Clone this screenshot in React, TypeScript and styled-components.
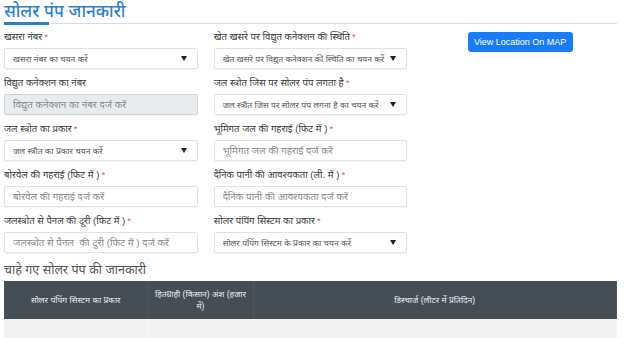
import React from 'react';
import styled, { createGlobalStyle } from 'styled-components';

const GlobalStyle = createGlobalStyle`
    html, body {
        margin: 0;
        padding: 0;
        background: #fff;
        font-family: "Liberation Sans", "Noto Sans", sans-serif;
    }
`;

const Page = styled.div`
    width: 627px;
    height: 338px;
    overflow: hidden;
    padding: 0 10px 0 4px;
    box-sizing: border-box;
`;

const TitleBar = styled.div`
    border-bottom: 1px solid #dcdcdc;
    height: 23px;
    display: flex;
    align-items: flex-end;
`;

const Title = styled.h2`
    margin: 0;
    font-size: 17px;
    font-weight: 500;
    line-height: 22px;
    color: #2b7fd0;
    position: relative;
    &:after {
        content: '';
        position: absolute;
        left: 0;
        bottom: -2px;
        width: 45px;
        height: 3px;
        background: #2b7fd0;
    }
`;

const FormGrid = styled.div`
    display: grid;
    grid-template-columns: repeat(3, minmax(0, 1fr));
    column-gap: 16px;
    padding-top: 6px;
`;

const Column = styled.div`
    display: flex;
    flex-direction: column;
    min-width: 0;
`;

const ButtonColumn = styled.div`
    display: flex;
    justify-content: center;
    align-items: flex-start;
    padding-top: 2px;
`;

const Group = styled.div`
    margin-bottom: 7px;
`;

const Label = styled.label`
    display: block;
    font-size: 9.6px;
    line-height: 14px;
    color: #3a3a3a;
    margin-bottom: 4px;
    white-space: nowrap;
`;

const Star = styled.span`
    color: #e5533d;
    margin-left: 2px;
`;

const Field = styled.div<{ $disabled?: boolean }>`
    height: 21px;
    box-sizing: border-box;
    border: 1px solid ${p => (p.$disabled ? '#ced4da' : '#e2e2e2')};
    border-radius: 2px;
    background: ${p => (p.$disabled ? '#e9ecef' : '#fff')};
    box-shadow: 0 1px 1px rgba(0, 0, 0, 0.04);
    display: flex;
    align-items: center;
    padding: 0 6px 0 8px;
`;

const SelectText = styled.span`
    flex: 1;
    min-width: 0;
    font-size: 8.5px;
    color: #555;
    white-space: nowrap;
    overflow: hidden;
`;

const Placeholder = styled.span`
    flex: 1;
    min-width: 0;
    font-size: 9.8px;
    color: #8a8a8a;
    white-space: pre;
    overflow: hidden;
`;

const Caret = styled.span`
    flex: none;
    width: 0;
    height: 0;
    border-left: 3px solid transparent;
    border-right: 3px solid transparent;
    border-top: 5px solid #222;
    margin: 0 4px 0 3px;
`;

const MapButton = styled.button`
    background: #1a7cf4;
    color: #fff;
    border: none;
    border-radius: 3px;
    font-family: "Liberation Sans", Arial, sans-serif;
    font-size: 9px;
    height: 20px;
    width: 105px;
    padding: 0;
    white-space: nowrap;
    cursor: pointer;
`;

const SubHeading = styled.h3`
    margin: 0 0 1px;
    font-size: 12.5px;
    font-weight: 400;
    color: #555;
    line-height: 20px;
`;

const Table = styled.table`
    width: 100%;
    border-collapse: collapse;
    table-layout: fixed;
`;

const Th = styled.th<{ $w?: number }>`
    box-sizing: border-box;
    background: #454d55;
    color: #eef0f2;
    font-size: 8.5px;
    font-weight: 400;
    height: 38px;
    padding: 0 4px;
    line-height: 12px;
    text-align: center;
    border-right: 1px solid #4d555d;
    width: ${p => (p.$w ? `${p.$w}px` : 'auto')};
`;

const Td = styled.td`
    background: #f2f2f2;
    height: 20px;
    border-right: 1px solid #f7f7f7;
`;

type FieldProps = {
    label: string;
    required?: boolean;
    text: string;
    kind: 'select' | 'input' | 'disabled';
};

const FormField = ({ label, required, text, kind }: FieldProps) => (
    <Group>
        <Label>
            {label}
            {required && <Star>*</Star>}
        </Label>
        <Field $disabled={kind === 'disabled'}>
            {kind === 'select' ? (
                <>
                    <SelectText>{text}</SelectText>
                    <Caret />
                </>
            ) : (
                <Placeholder>{text}</Placeholder>
            )}
        </Field>
    </Group>
);

export default function App() {
    return (
        <Page>
            <GlobalStyle />
            <TitleBar>
                <Title>सोलर पंप जानकारी</Title>
            </TitleBar>
            <FormGrid>
                <Column>
                    <FormField label="खसरा नंबर" required kind="select" text="खसरा नंबर का चयन करें" />
                    <FormField label="विद्युत कनेक्शन का नंबर" kind="disabled" text="विद्युत कनेक्शन का नंबर दर्ज करें" />
                    <FormField label="जल स्त्रोत का प्रकार" required kind="select" text="जल स्त्रोत का प्रकार चयन करें" />
                    <FormField label="बोरवेल की गहराई (फिट में )" required kind="input" text="बोरवेल की गहराई दर्ज करें" />
                    <FormField label="जलस्त्रोत से पैनल  की दूरी (फिट में )" required kind="input" text="जलस्त्रोत से पैनल  की दुरी (फिट में ) दर्ज करें" />
                </Column>
                <Column>
                    <FormField label="खेत खसरे पर विद्युत कनेक्शन की स्थिति" required kind="select" text="खेत खसरे पर विद्युत कनेक्शन की स्थिति का चयन करें" />
                    <FormField label="जल स्त्रोत जिस पर सोलर पंप लगता है" required kind="select" text="जल स्त्रोत जिस पर सोलर पंप लगना है का चयन करें" />
                    <FormField label="भूमिगत जल की गहराई (फिट में )" required kind="input" text="भूमिगत जल की गहराई दर्ज करें" />
                    <FormField label="दैनिक पानी की आवश्यकता (ली. में )" required kind="input" text="दैनिक पानी की आवश्यकता दर्ज करें" />
                    <FormField label="सोलर पंपिंग सिस्टम का प्रकार" required kind="select" text="सोलर पंपिंग सिस्टम के प्रकार का चयन करें" />
                </Column>
                <ButtonColumn>
                    <MapButton>View Location On MAP</MapButton>
                </ButtonColumn>
            </FormGrid>
            <SubHeading>चाहे गए सोलर पंप की जानकारी</SubHeading>
            <Table>
                <thead>
                    <tr>
                        <Th $w={144}>सोलर पंपिंग सिस्टम का प्रकार</Th>
                        <Th $w={105}>हितग्राही (किसान) अंश (हजार में)</Th>
                        <Th>डिस्चार्ज (लीटर में प्रतिदिन)</Th>
                    </tr>
                </thead>
                <tbody>
                    <tr>
                        <Td />
                        <Td />
                        <Td />
                    </tr>
                </tbody>
            </Table>
        </Page>
    );
}
